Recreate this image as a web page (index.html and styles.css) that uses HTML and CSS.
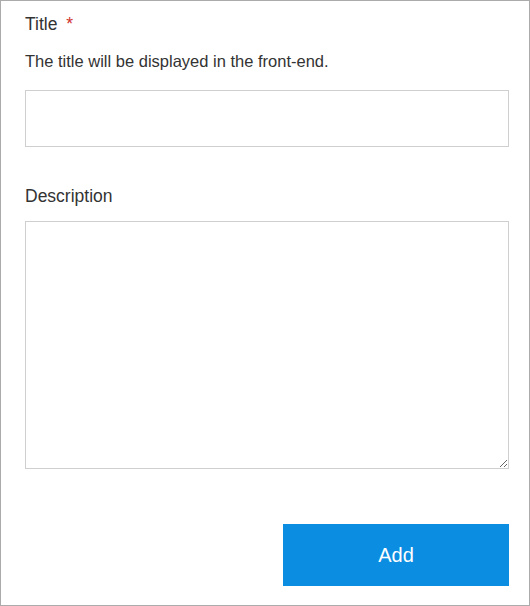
FILE: index.html
```html
<!DOCTYPE html>
<html>
<head>
<meta charset="utf-8">
<link rel="stylesheet" href="styles.css">
</head>
<body>
<div class="frame">
  <form class="form">
    <div class="field">
      <label class="label">Title <span class="req">*</span></label>
      <p class="help">The title will be displayed in the front-end.</p>
      <input class="input" type="text">
    </div>
    <div class="field field-desc">
      <label class="label">Description</label>
      <textarea class="textarea"></textarea>
    </div>
    <div class="actions">
      <button class="btn" type="button">Add</button>
    </div>
  </form>
</div>
</body>
</html>
```
FILE: styles.css
```css
html, body {
  margin: 0;
  padding: 0;
  background: #fff;
}
.frame {
  width: 530px;
  height: 606px;
  box-sizing: border-box;
  border: 1px solid #ababab;
  padding: 12px 20px 0 24px;
  font-family: "Liberation Sans", Arial, sans-serif;
  color: #333;
}
.form {
  display: flex;
  flex-direction: column;
}
.field {
  display: flex;
  flex-direction: column;
}
.label {
  font-size: 17.5px;
  line-height: 22px;
  color: #333;
}
.req {
  color: #d0312d;
  margin-left: 4px;
}
.help {
  margin: 16px 0 0;
  font-size: 16.5px;
  line-height: 20px;
  color: #333;
}
.input {
  margin-top: 19px;
  width: 484px;
  height: 57px;
  box-sizing: border-box;
  border: 1px solid #cfcfcf;
  border-radius: 0;
  outline: none;
  padding: 0 10px;
}
.field-desc {
  margin-top: 38px;
}
.textarea {
  margin-top: 14px;
  width: 484px;
  height: 248px;
  box-sizing: border-box;
  border: 1px solid #cfcfcf;
  border-radius: 0;
  outline: none;
  resize: both;
  padding: 6px 10px;
  display: block;
}
.actions {
  display: flex;
  justify-content: flex-end;
  margin-top: 55px;
  width: 484px;
}
.btn {
  width: 226px;
  height: 62px;
  border: none;
  border-radius: 0;
  background: #0b8de2;
  color: #fff;
  font-family: "Liberation Sans", Arial, sans-serif;
  font-size: 20px;
  cursor: pointer;
}
```
